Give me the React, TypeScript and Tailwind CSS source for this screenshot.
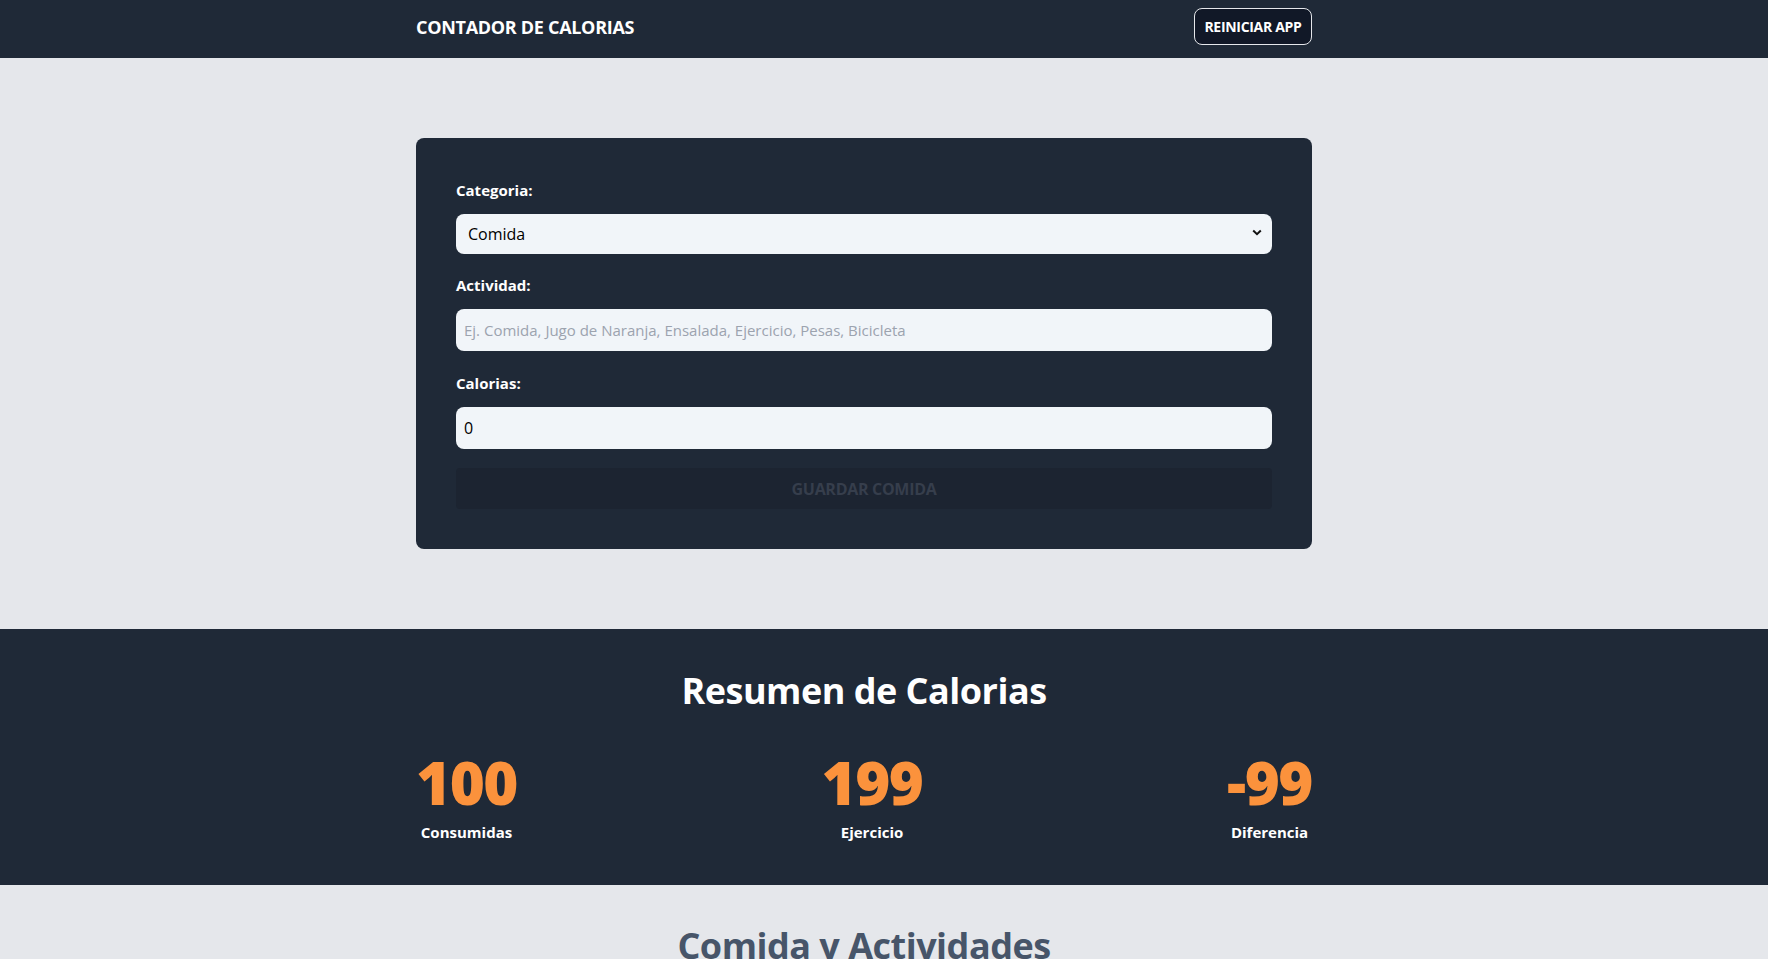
import React from "react";

export default function App() {
  return (
    <div className="min-h-screen bg-[#e5e7eb] font-['Open_Sans',sans-serif]">
      <header className="bg-[#1f2937] h-[58px] pt-2">
        <div className="pr-10">
          <div className="mx-auto w-[896px] flex justify-between items-start">
            <h1 className="h-[37px] flex items-center text-lg font-bold text-white uppercase tracking-[-0.3px]">
              Contador de Calorias
            </h1>
            <button className="h-[37px] w-[118px] rounded-lg border border-[#e5e7eb] bg-[#111827] text-white text-sm font-bold uppercase tracking-[-0.3px]">
              Reiniciar App
            </button>
          </div>
        </div>
      </header>

      <section className="py-20">
        <div className="pr-10">
          <form className="mx-auto w-[896px] bg-[#1f2937] rounded-lg p-10 flex flex-col">
            <div className="flex flex-col gap-3">
              <label className="text-white font-bold text-[15px] leading-6">Categoria:</label>
              <div className="relative">
                <select className="w-full h-[40px] rounded-lg bg-[#f1f5f9] px-3 text-base text-black appearance-none outline-none">
                  <option>Comida</option>
                  <option>Ejercicio</option>
                </select>
                <svg className="absolute right-[10px] top-[15px] pointer-events-none" width="10" height="7" viewBox="0 0 10 7">
                  <path d="M1.2 1.5 L5 5.2 L8.8 1.5" fill="none" stroke="#111" strokeWidth="2" />
                </svg>
              </div>
            </div>
            <div className="flex flex-col gap-3 mt-[19px]">
              <label className="text-white font-bold text-[15px] leading-6">Actividad:</label>
              <input
                className="w-full h-[42px] rounded-lg bg-[#f1f5f9] px-2 text-[15px] text-black outline-none placeholder:text-[#9ca3af]"
                placeholder="Ej. Comida, Jugo de Naranja, Ensalada, Ejercicio, Pesas, Bicicleta"
              />
            </div>
            <div className="flex flex-col gap-3 mt-5">
              <label className="text-white font-bold text-[15px] leading-6">Calorias:</label>
              <input
                className="w-full h-[42px] rounded-lg bg-[#f1f5f9] px-2 text-base text-black outline-none"
                defaultValue="0"
              />
            </div>
            <button
              type="button"
              className="mt-[19px] h-[41px] w-full rounded bg-[#1c2431] text-[#363e4c] font-bold uppercase text-base tracking-[-0.3px]"
            >
              Guardar Comida
            </button>
          </form>
        </div>
      </section>

      <section className="bg-[#1f2937] pt-[42px] pb-[41px]">
        <div className="pr-10">
          <div className="mx-auto w-[896px]">
            <h2 className="text-4xl font-bold text-white text-center leading-10 tracking-[-0.5px]">
              Resumen de Calorias
            </h2>
            <div className="mt-[41px] flex justify-between">
              {[
                ["100", "Consumidas"],
                ["199", "Ejercicio"],
                ["-99", "Diferencia"],
              ].map(([n, l]) => (
                <div key={l} className="flex flex-col items-center">
                  <span className="text-6xl leading-[60px] font-extrabold text-[#fb923c] tracking-[-1.5px]">{n}</span>
                  <span className="mt-2 text-[15px] leading-6 font-bold text-white">{l}</span>
                </div>
              ))}
            </div>
          </div>
        </div>
      </section>

      <section className="pt-[41px] pb-10">
        <div className="pr-10">
          <div className="mx-auto w-[896px]">
            <h2 className="text-4xl font-bold text-[#475569] text-center leading-10 tracking-[-0.5px]">
              Comida y Actividades
            </h2>
          </div>
        </div>
      </section>
    </div>
  );
}
